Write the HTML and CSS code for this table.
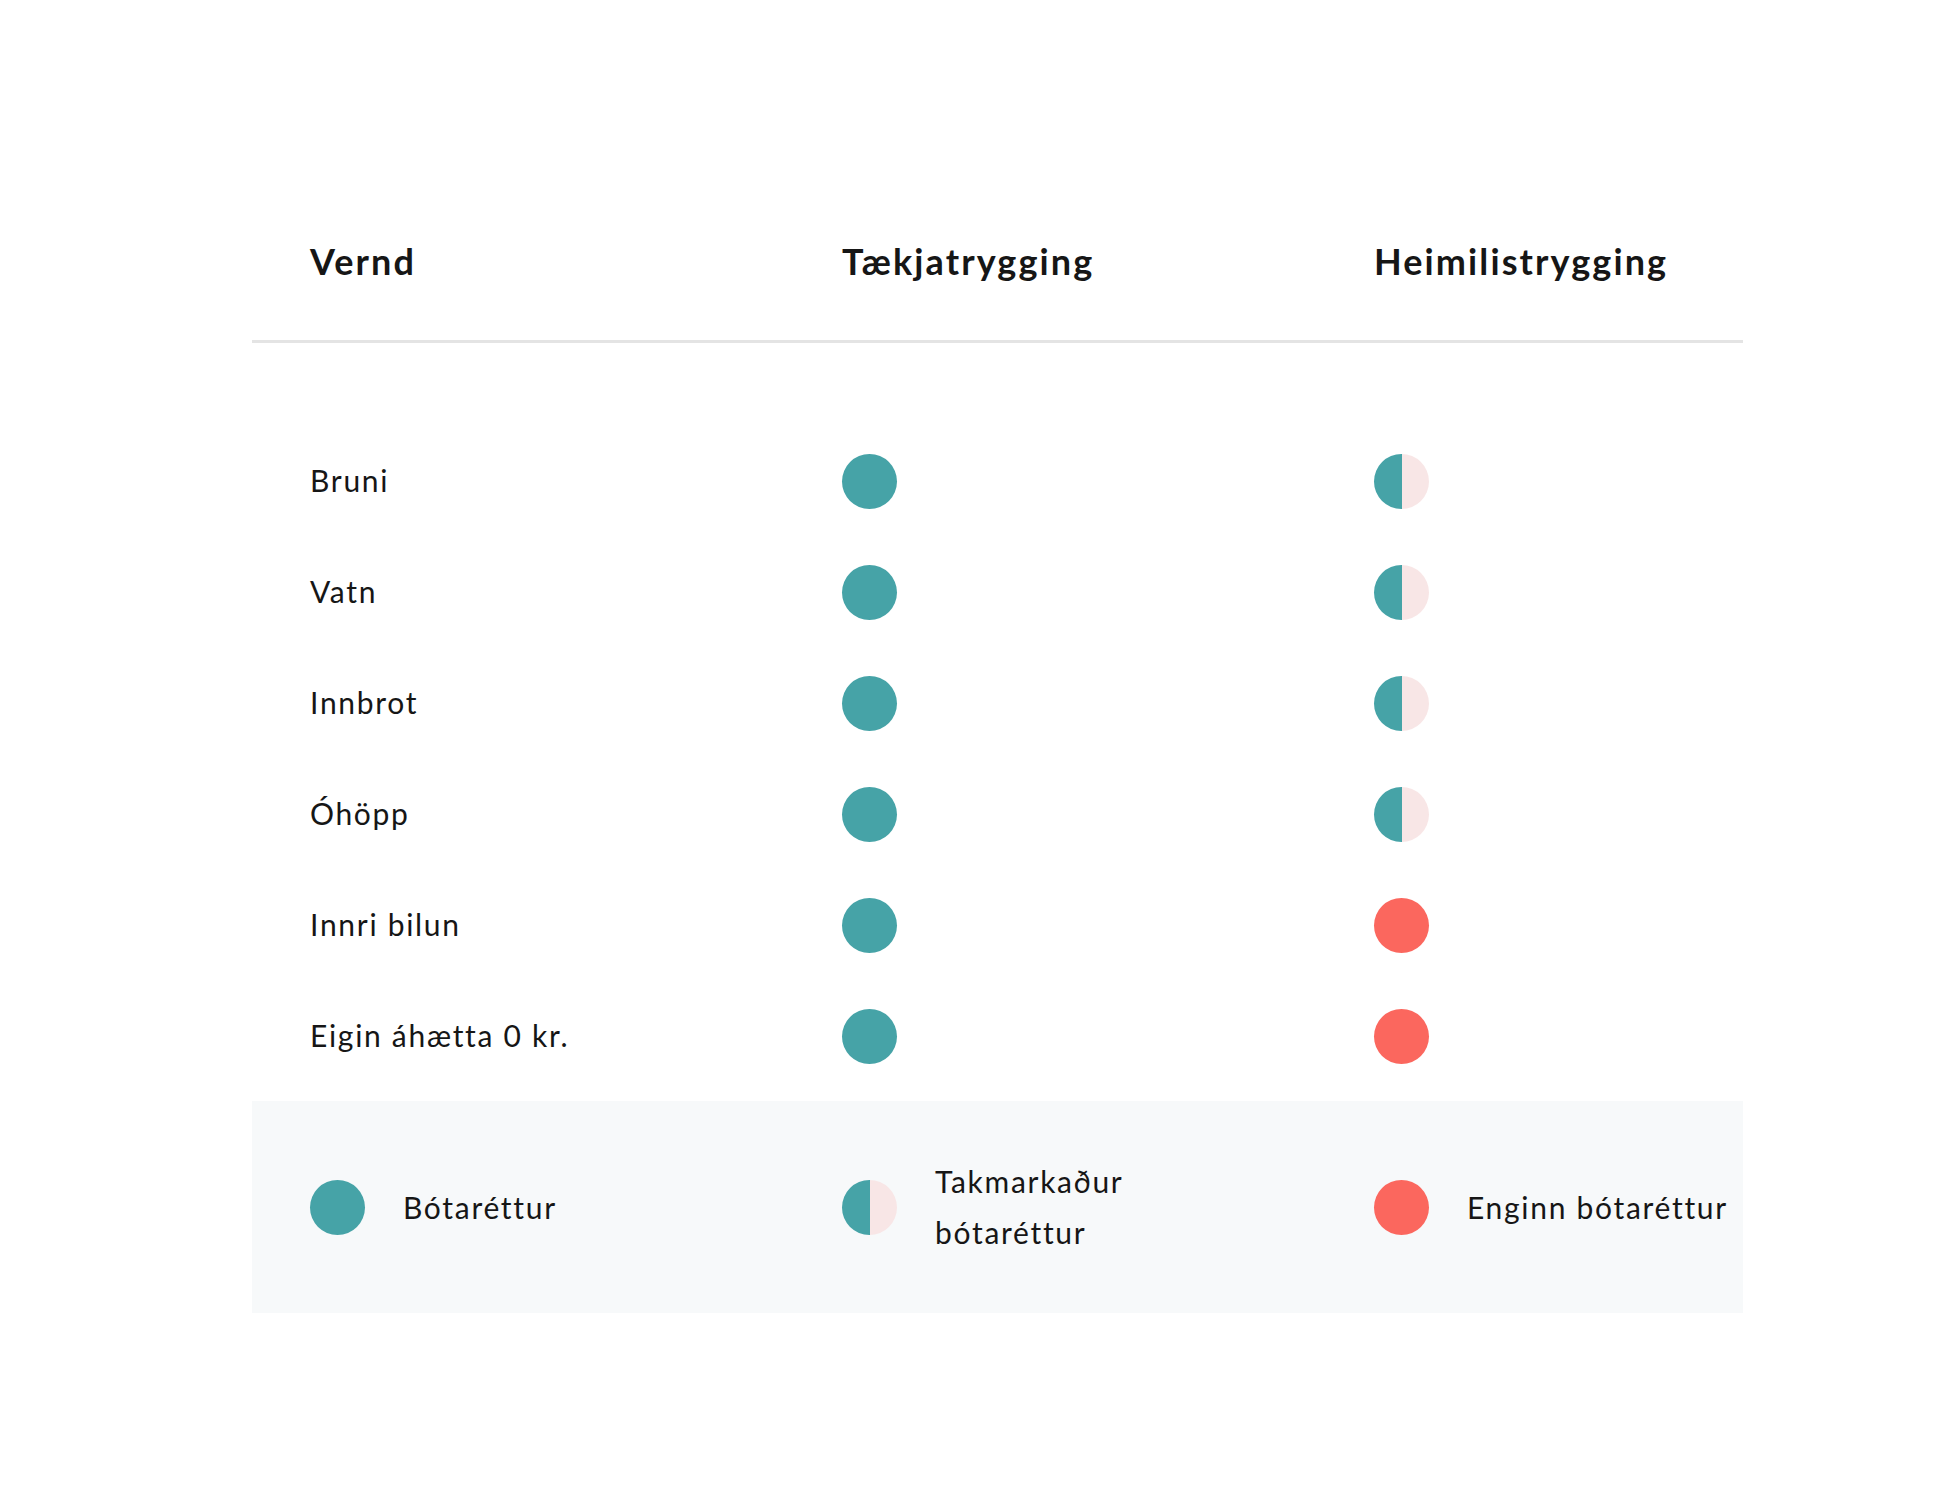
FILE: index.html
```html
<!DOCTYPE html>
<html lang="is">
<head>
<meta charset="utf-8">
<title>Vernd</title>
<link rel="stylesheet" href="styles.css">
</head>
<body>
<div class="compare">
  <div class="head">
    <div class="hcell">Vernd</div>
    <div class="hcell">Tækjatrygging</div>
    <div class="hcell">Heimilistrygging</div>
  </div>
  <div class="rows">
    <div class="row"><div class="label">Bruni</div><div class="cell"><span class="dot full"></span></div><div class="cell"><span class="dot half"></span></div></div>
    <div class="row"><div class="label">Vatn</div><div class="cell"><span class="dot full"></span></div><div class="cell"><span class="dot half"></span></div></div>
    <div class="row"><div class="label">Innbrot</div><div class="cell"><span class="dot full"></span></div><div class="cell"><span class="dot half"></span></div></div>
    <div class="row"><div class="label">Óhöpp</div><div class="cell"><span class="dot full"></span></div><div class="cell"><span class="dot half"></span></div></div>
    <div class="row"><div class="label">Innri bilun</div><div class="cell"><span class="dot full"></span></div><div class="cell"><span class="dot none"></span></div></div>
    <div class="row"><div class="label">Eigin áhætta 0 kr.</div><div class="cell"><span class="dot full"></span></div><div class="cell"><span class="dot none"></span></div></div>
  </div>
  <div class="legend">
    <div class="litem"><span class="dot full"></span><span class="ltext">Bótaréttur</span></div>
    <div class="litem"><span class="dot half"></span><span class="ltext">Takmarkaður<br>bótaréttur</span></div>
    <div class="litem"><span class="dot none"></span><span class="ltext">Enginn bótaréttur</span></div>
  </div>
</div>
</body>
</html>
```
FILE: styles.css
```css
html, body {
  margin: 0;
  padding: 0;
  background: #ffffff;
}
body {
  font-family: Lato, "Open Sans", sans-serif;
  color: #161616;
}
.compare {
  width: 1491px;
  margin-left: 252px;
  padding-top: 239px;
}
.head {
  display: grid;
  grid-template-columns: 532px 532px 1fr;
  padding-left: 58px;
  padding-bottom: 57px;
  border-bottom: 3px solid #e4e4e4;
}
.hcell {
  font-size: 36px;
  font-weight: 700;
  line-height: 44px;
  letter-spacing: 2.1px;
}
.rows {
  padding-top: 83px;
  padding-bottom: 9px;
}
.row {
  display: grid;
  grid-template-columns: 532px 532px 1fr;
  padding-left: 58px;
  height: 111px;
  align-items: center;
}
.label {
  font-size: 30px;
  letter-spacing: 1.7px;
  margin-top: -3px;
}
.cell {
  display: flex;
  align-items: center;
}
.dot {
  display: inline-block;
  width: 55px;
  height: 55px;
  border-radius: 50%;
  flex: none;
}
.full { background: #46a3a7; }
.none { background: #fb675e; }
.half { background: linear-gradient(to right, #46a3a7 50%, #f8e6e6 50%); }
.legend {
  display: grid;
  grid-template-columns: 532px 532px 1fr;
  padding-left: 58px;
  height: 212px;
  align-items: center;
  background: #f7f9fa;
}
.litem {
  display: flex;
  align-items: center;
  gap: 38px;
}
.ltext {
  font-size: 30px;
  line-height: 51px;
  letter-spacing: 1.7px;
}
```
